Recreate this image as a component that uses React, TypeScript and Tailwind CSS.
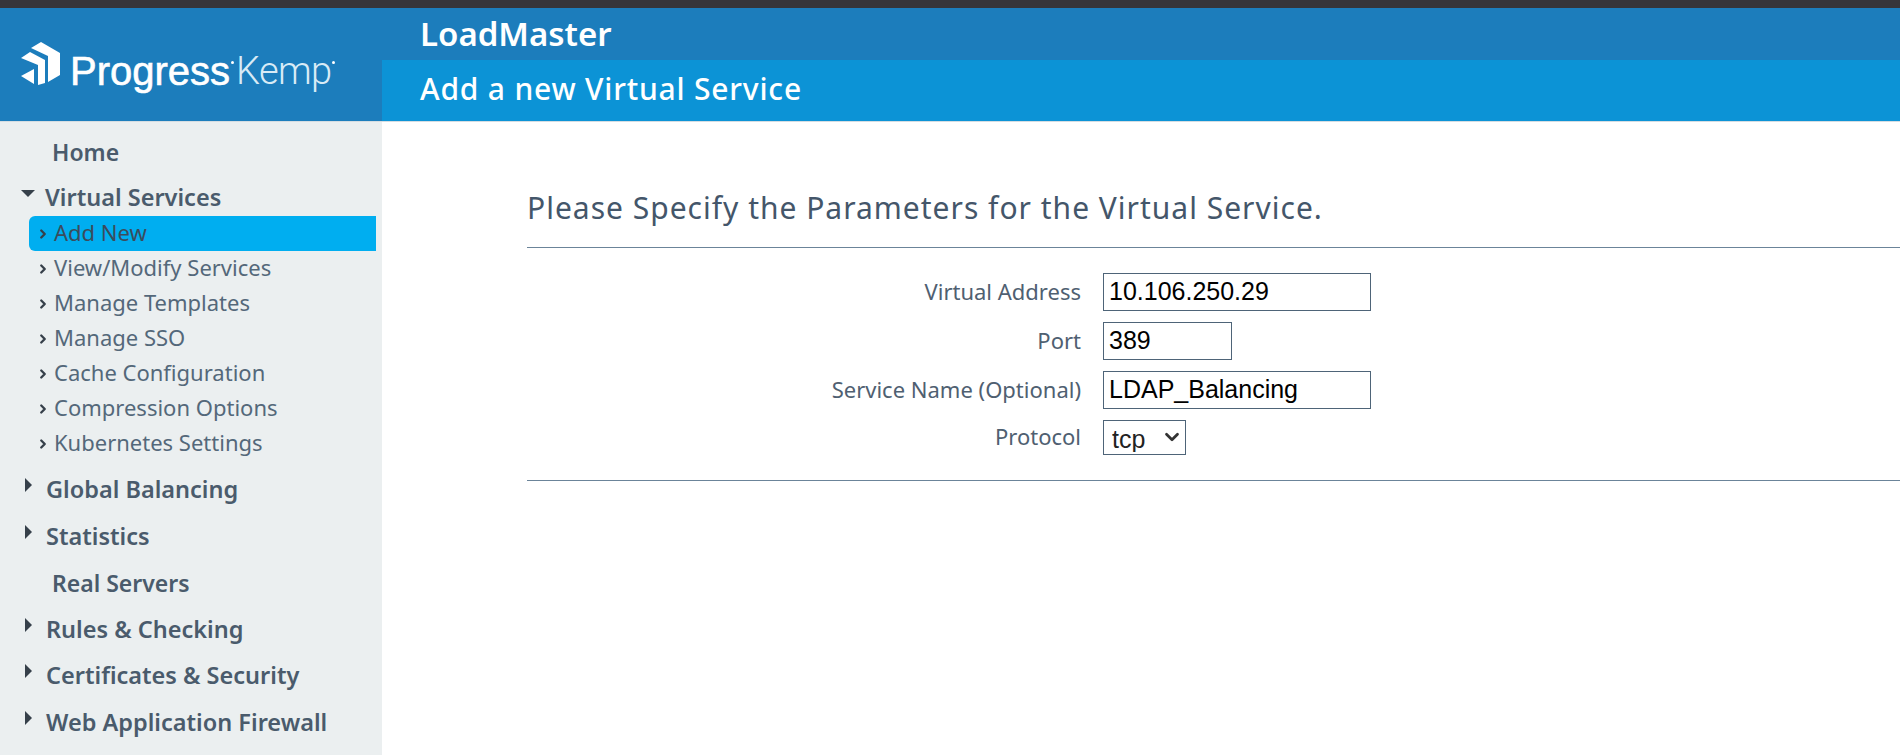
import { ChevronDown, ChevronRight } from 'lucide-react';

const subItems = [
  'Add New',
  'View/Modify Services',
  'Manage Templates',
  'Manage SSO',
  'Cache Configuration',
  'Compression Options',
  'Kubernetes Settings',
];

function Logo() {
  return (
    <div className="flex items-start">
      <svg width="41" height="44" viewBox="0 0 41 44" className="mr-[9px]" fill="#fff">
        <path d="M11 6 L21 0 L40 11 L40 33 L28 40 L28 14 Z" />
        <path d="M1 16 L10 10 L25 18 L25 41 L18 43 L18 23 Z" />
        <path d="M1 34 L14 27 L14 42 Z" />
      </svg>
      <div className="mt-[9px] flex items-center">
        <span className="text-[40px] leading-none font-medium tracking-[0px] text-white font-['Liberation_Sans',sans-serif] [-webkit-text-stroke:0.6px_white]">
          Progress
        </span>
        <span className="mb-4 ml-px mr-[2px] h-[3px] w-[3px] rounded-full bg-white" />
        <span className="text-[38px] leading-none font-light tracking-[-0.6px] text-[#d8ebf6] font-['Roboto',sans-serif]">
          Kemp
        </span>
        <span className="mb-4 h-[3px] w-[3px] rounded-full bg-white" />
      </div>
    </div>
  );
}

function TopItem({ label, mode, className }: { label: string; mode: 'none' | 'open' | 'closed'; className: string }) {
  return (
    <div
      className={`flex items-center leading-8 font-semibold text-[#4a5b6c] ${
        mode === 'none' ? 'text-[23px]' : 'text-[23.5px]'
      } ${className}`}
    >
      {mode === 'none' && <span className="w-[52px]" />}
      {mode === 'open' && (
        <span className="mb-2 ml-[21px] mr-[10px] h-0 w-0 border-x-[7px] border-t-[7px] border-x-transparent border-t-[#36404a]" />
      )}
      {mode === 'closed' && (
        <span className="mb-2 ml-[25px] mr-[14px] h-0 w-0 border-y-[7px] border-l-[7px] border-y-transparent border-l-[#36404a]" />
      )}
      {label}
    </div>
  );
}

function Field({ label, children, className }: { label: string; children: React.ReactNode; className: string }) {
  return (
    <div className={`flex items-center ${className}`}>
      <label className="w-[576px] pb-[2px] pr-[22px] text-right text-[22px] text-[#4f6071]">{label}</label>
      {children}
    </div>
  );
}

export default function App() {
  return (
    <div className="flex h-[756px] w-[1900px] flex-col overflow-hidden bg-white font-['Noto_Sans',sans-serif]">
      <div className="h-2 bg-[#36353a]" />

      <header className="flex h-[114px] border-b border-[#d5dde2] bg-[#1c7dbc]">
        <div className="flex w-[382px] items-center pl-5 pt-[3px]">
          <Logo />
        </div>
        <div className="flex flex-1 flex-col">
          <div className="flex h-[52px] items-center pl-[38px] text-[33px] font-semibold text-white">LoadMaster</div>
          <div className="flex flex-1 items-center bg-[#0c93d6] pb-[5px] pl-[38px] text-[30px] font-medium tracking-[0.8px] text-white">
            Add a new Virtual Service
          </div>
        </div>
      </header>

      <div className="flex flex-1">
        <nav className="h-[633px] w-[382px] bg-[#ebeff0] pt-[14px]">
          <TopItem label="Home" mode="none" className="mb-[13px]" />
          <TopItem label="Virtual Services" mode="open" className="mb-[3px]" />
          <ul className="mb-[12px] ml-[29px] mr-[6px]">
            {subItems.map((item, i) => (
              <li
                key={item}
                className={`flex h-[35px] items-center pb-[2px] pl-[7px] text-[22px] ${
                  i === 0 ? 'rounded-l-md bg-[#00aef0] text-[#3b4c5c]' : 'text-[#54687a]'
                }`}
              >
                <ChevronRight size={14} strokeWidth={4} className="mr-[4px] mt-[2px] text-[#36404a]" />
                {item}
              </li>
            ))}
          </ul>
          <TopItem label="Global Balancing" mode="closed" className="mb-[15px]" />
          <TopItem label="Statistics" mode="closed" className="mb-[15px]" />
          <TopItem label="Real Servers" mode="none" className="mb-[14px]" />
          <TopItem label="Rules & Checking" mode="closed" className="mb-[14px]" />
          <TopItem label="Certificates & Security" mode="closed" className="mb-[15px]" />
          <TopItem label="Web Application Firewall" mode="closed" className="" />
        </nav>

        <main className="flex-1 pl-[145px] pt-[66px]">
          <h1 className="border-b border-[#6b8499] pb-[19px] text-[30px] leading-10 tracking-[1px] text-[#44566a]">
            Please Specify the Parameters for the Virtual Service.
          </h1>
          <form className="border-b border-[#6b8499] pt-[25px] pb-[25px]">
            <Field label="Virtual Address" className="mb-[11px]">
              <input
                readOnly
                value="10.106.250.29"
                className="h-[38px] w-[268px] border border-[#4e6478] px-[5px] pb-[2px] font-['Liberation_Sans',sans-serif] text-[25px] text-black outline-none"
              />
            </Field>
            <Field label="Port" className="mb-[11px]">
              <input
                readOnly
                value="389"
                className="h-[38px] w-[129px] border border-[#4e6478] px-[5px] pb-[2px] font-['Liberation_Sans',sans-serif] text-[25px] text-black outline-none"
              />
            </Field>
            <Field label="Service Name (Optional)" className="mb-[11px]">
              <input
                readOnly
                value="LDAP_Balancing"
                className="h-[38px] w-[268px] border border-[#4e6478] px-[5px] pb-[2px] font-['Liberation_Sans',sans-serif] text-[25px] text-black outline-none"
              />
            </Field>
            <Field label="Protocol" className="">
              <div className="relative h-[35px] w-[83px]">
                <select
                  defaultValue="tcp"
                  className="h-full w-full appearance-none border border-[#4e6478] bg-white pb-[2px] pl-[8px] font-['Liberation_Sans',sans-serif] text-[25px] text-[#222] outline-none"
                >
                  <option>tcp</option>
                  <option>udp</option>
                </select>
                <ChevronDown size={22} strokeWidth={3} className="pointer-events-none absolute right-[3px] top-[6px] text-[#333]" />
              </div>
            </Field>
          </form>
        </main>
      </div>
    </div>
  );
}
